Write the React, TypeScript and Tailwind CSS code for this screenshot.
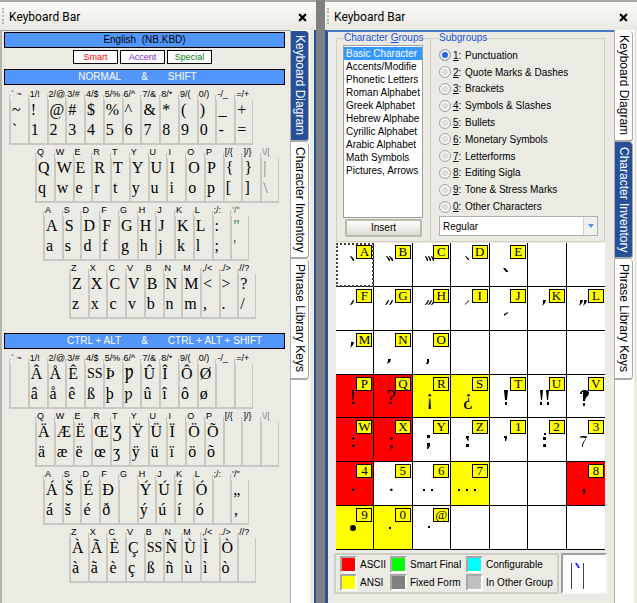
import { useState } from 'react';
import { X } from 'lucide-react';

// [label, shifted, plain, color?]
type KeyDef = [string, string, string, string?];

interface RowDef {
  className: string;
  keys: KeyDef[];
}

const ROW_1 = 'grid grid-cols-13 pl-[5px] pr-[32px]';
const ROW_2 = 'grid grid-cols-13 pl-[31px] pr-[6px]';
const ROW_3 = 'grid grid-cols-11 pl-[39px] pr-[36px]';
const ROW_4 = 'grid grid-cols-10 pl-[65px] pr-[29px]';

const NORMAL_ROWS: RowDef[] = [
  {
    className: ROW_1,
    keys: [
      ['` ~', '~', '`'], ['1/!', '!', '1'], ['2/@', '@', '2'], ['3/#', '#', '3'], ['4/$', '$', '4'],
      ['5/%', '%', '5'], ['6/^', '^', '6'], ['7/&', '&', '7'], ['8/*', '*', '8'], ['9/(', '(', '9'],
      ['0/)', ')', '0'], ['-/_', '_', '-'], ['=/+', '+', '='],
    ],
  },
  {
    className: ROW_2,
    keys: [
      ['Q', 'Q', 'q'], ['W', 'W', 'w'], ['E', 'E', 'e'], ['R', 'R', 'r'], ['T', 'T', 't'],
      ['Y', 'Y', 'y'], ['U', 'U', 'u'], ['I', 'I', 'i'], ['O', 'O', 'o'], ['P', 'P', 'p'],
      ['[/{', '{', '['], [']/}', '}', ']'], ['\\/|', '|', '\\', 'text-[#808080]'],
    ],
  },
  {
    className: ROW_3,
    keys: [
      ['A', 'A', 'a'], ['S', 'S', 's'], ['D', 'D', 'd'], ['F', 'F', 'f'], ['G', 'G', 'g'], ['H', 'H', 'h'],
      ['J', 'J', 'j'], ['K', 'K', 'k'], ['L', 'L', 'l'], [';/:', ':', ';'], ['\'/"', '"', "'", 'text-[#3f7a3f]'],
    ],
  },
  {
    className: ROW_4,
    keys: [
      ['Z', 'Z', 'z'], ['X', 'X', 'x'], ['C', 'C', 'c'], ['V', 'V', 'v'], ['B', 'B', 'b'],
      ['N', 'N', 'n'], ['M', 'M', 'm'], [',/<', '<', ','], ['./>', '>', '.'], ['//?', '?', '/'],
    ],
  },
];

const CTRL_ROWS: RowDef[] = [
  {
    className: ROW_1,
    keys: [
      ['` ~', '', ''], ['1/!', 'Â', 'â'], ['2/@', 'Å', 'å'], ['3/#', 'Ê', 'ê'], ['4/$', 'SS', 'ß'],
      ['5/%', 'Þ', 'þ'], ['6/^', 'Ƿ', 'ƿ'], ['7/&', 'Û', 'û'], ['8/*', 'Î', 'î'], ['9/(', 'Ô', 'ô'],
      ['0/)', 'Ø', 'ø'], ['-/_', '', ''], ['=/+', '', ''],
    ],
  },
  {
    className: ROW_2,
    keys: [
      ['Q', 'Ä', 'ä'], ['W', 'Æ', 'æ'], ['E', 'Ë', 'ë'], ['R', 'Œ', 'œ'], ['T', 'Ʒ', 'ʒ'],
      ['Y', 'Ÿ', 'ÿ'], ['U', 'Ü', 'ü'], ['I', 'Ï', 'ï'], ['O', 'Ö', 'ö'], ['P', 'Õ', 'õ'],
      ['[/{', '', ''], [']/}', '', ''], ['\\/|', '', '', 'text-[#808080]'],
    ],
  },
  {
    className: ROW_3,
    keys: [
      ['A', 'Á', 'á'], ['S', 'Š', 'š'], ['D', 'É', 'é'], ['F', 'Ð', 'ð'], ['G', '', ''], ['H', 'Ý', 'ý'],
      ['J', 'Ú', 'ú'], ['K', 'Í', 'í'], ['L', 'Ó', 'ó'], [';/:', '', ''], ['\'/"', '„', '‚'],
    ],
  },
  {
    className: ROW_4,
    keys: [
      ['Z', 'À', 'à'], ['X', 'Ã', 'ã'], ['C', 'È', 'è'], ['V', 'Ç', 'ç'], ['B', 'SS', 'ß'],
      ['N', 'Ñ', 'ñ'], ['M', 'Ù', 'ù'], [',/<', 'Ì', 'ì'], ['./>', 'Ò', 'ò'], ['//?', '', ''],
    ],
  },
];

const TABS = [
  { name: 'Keyboard Diagram', height: 'h-[111px]' },
  { name: 'Character Inventory', height: 'h-[117px]' },
  { name: 'Phrase Library Keys', height: 'h-[121px]' },
];

const GROUPS = [
  'Basic Character', 'Accents/Modifie', 'Phonetic Letters', 'Roman Alphabet', 'Greek Alphabet',
  'Hebrew Alphabe', 'Cyrillic Alphabet', 'Arabic Alphabet', 'Math Symbols', 'Pictures, Arrows',
];

const SUBGROUPS = [
  ['1', 'Punctuation'], ['2', 'Quote Marks & Dashes'], ['3', 'Brackets'], ['4', 'Symbols & Slashes'],
  ['5', 'Bullets'], ['6', 'Monetary Symbols'], ['7', 'Letterforms'], ['8', 'Editing Sigla'],
  ['9', 'Tone & Stress Marks'], ['0', 'Other Characters'],
];

interface CellDef {
  id?: string;
  text?: string;
  path?: string;
  bg?: string;
  bold?: boolean;
}

const RED = 'bg-[#ff0000]';
const YELLOW = 'bg-[#ffff00]';

// Paths are drawn on a 38x43 cell
const CELLS: CellDef[] = [
  { id: 'A', path: 'M14 13h1l3 3v2h-1z' },
  { id: 'B', path: 'M12 13h1l3 3v2h-1zM15 13h1l3 3v2h-1z' },
  { id: 'C', path: 'M12 13h1l2 3v2h-1zM15 13h1l2 3v2h-1zM18 13h1l2 3v2h-1z' },
  { id: 'D', path: 'M14 13h1l3 3v1h-1z' },
  { id: 'E', path: 'M13 25h2l3 3v1h-2z' },
  {},
  {},
  { id: 'F', path: 'M17 13h1l-1 3l-2 2h-1z' },
  { id: 'G', path: 'M14 13h1l-1 3l-2 2h-1zM18 13h1l-1 3l-2 2h-1z' },
  { id: 'H', path: 'M15 13h1l-1 3l-2 2h-1zM18 13h1l-1 3l-2 2h-1zM21 13h1l-1 3l-2 2h-1z' },
  { id: 'I', path: 'M18 13v1l-4 4v-1z' },
  { id: 'J', path: 'M18 25v1l-4 3v-2z' },
  { id: 'K', path: 'M15 13h3l-1 3l-3 3l1-3z' },
  { id: 'L', path: 'M13 13h3l-1 3l-3 3l1-3zM17 13h3l-1 3l-3 3l1-3z' },
  { id: 'M', path: 'M15 11h3l-1 3l-3 3l1-3z' },
  { id: 'N', path: 'M14 28h3l-1 3l-3 2l1-3z' },
  { id: 'O', path: 'M14 28h2v3l-1 2h-2l1-2z' },
  {},
  {},
  {},
  {},
  { id: 'P', text: '!', bg: RED },
  { id: 'Q', text: '?', bg: RED },
  { id: 'R', text: '¡', bg: YELLOW },
  { id: 'S', text: '¿', bg: YELLOW },
  { id: 'T', path: 'M14 15h4l-1 10h-2zM15 27h2v3h-2z' },
  { id: 'U', path: 'M12 15h3l-1 10h-1zM12 27h2v3h-2zM18 15h3l-1 10h-1zM19 27h2v3h-2z' },
  { id: 'V', path: 'M13 19c0-5 9-5 9-1c0 3-4 4-4 8h-2v-9h-1v2zM16 28h2v3h-2z' },
  { id: 'W', text: ':', bg: RED },
  { id: 'X', text: ';', bg: RED },
  { id: 'Y', path: 'M14 17h3v3h-3zM14 25h3v3l-2 3h-1v-2l1-1h-1z' },
  { id: 'Z', path: 'M15 18h3v2h-1l1 2l-1 1l-2-3zM15 26h3v3h-3z' },
  { id: '1', path: 'M14 18h3v2l-1 3h-1v-3h-1z' },
  { id: '2', path: 'M16 15h2v2h-2zM15 19h3v3h-3zM15 26h3v3h-3z' },
  { id: '3', path: 'M13 19c2-2 3 0 7-1c-1 4-4 6-4 11h-1c0-5 3-7 4-9c-3 0-4-1-6 0z' },
  { id: '4', text: '.', bg: RED },
  { id: '5', text: '.' },
  { id: '6', path: 'M10 27h2v2h-2zM18 27h2v2h-2z' },
  { id: '7', path: 'M7 27h2v2h-2zM15 27h2v2h-2zM23 27h2v2h-2z', bg: YELLOW },
  {},
  {},
  { id: '8', text: ',', bg: RED },
  { id: '9', path: 'M14 22a3 3 0 1 0 6 0a3 3 0 1 0-6 0z', bg: YELLOW },
  { id: '0', path: 'M15 21h2v2h-2z', bg: YELLOW },
  { id: '@', path: 'M15 20h2v2h-2z' },
  {},
  {},
  {},
  {},
];

const LEGEND = [
  ['ASCII', 'bg-[#ff0000]'], ['Smart Final', 'bg-[#00ff00]'], ['Configurable', 'bg-[#00ffff]'],
  ['ANSI', 'bg-[#ffff00]'], ['Fixed Form', 'bg-[#808080]'], ['In Other Group', 'bg-[#c0c0c0]'],
];

function TitleBar() {
  return (
    <header className="flex h-[30px] items-center border-t-2 border-[#aaa8a2] bg-linear-to-b from-[#fbfbf9] to-[#e9e8e0] pr-2 pl-[2px]">
      <span className="h-4 border-l-2 border-dotted border-[#b8b6ae]" />
      <h1 className="ml-[5px] flex-1 pt-[2px] font-['Roboto',sans-serif] text-[12px] text-black">Keyboard Bar</h1>
      <button aria-label="Close" className="pt-[2px]">
        <X className="size-[11px]" strokeWidth={5} />
      </button>
    </header>
  );
}

function SideTabs({ initial }: { initial: number }) {
  const [active, setActive] = useState(initial);
  return (
    <div role="tablist" className="flex w-5 shrink-0 flex-col border-l border-[#b0b0b0] bg-white pt-px">
      {TABS.map((tab, i) => (
        <button
          key={tab.name}
          role="tab"
          aria-selected={i === active}
          onClick={() => setActive(i)}
          className={`${tab.height} ${
            i === active ? 'bg-[#27509a] text-white' : 'bg-white text-black'
          } flex w-[18px] items-center justify-center rounded-r-sm border-r border-b-2 border-[#a8a8a8] text-[12px] leading-4 whitespace-nowrap [writing-mode:vertical-rl]`}
        >
          {tab.name}
        </button>
      ))}
    </div>
  );
}

function Banner({ left, right }: { left: string; right: string }) {
  return (
    <div className="grid h-4 grid-cols-[1fr_auto_1fr] items-center gap-5 border border-black bg-[#5295fb] text-[10px] leading-[14px] text-white">
      <span className="text-right">{left}</span>
      <span>&amp;</span>
      <span>{right}</span>
    </div>
  );
}

function KeyRows({ rows }: { rows: RowDef[] }) {
  return (
    <div>
      {rows.map((row, r) => (
        <div key={r} className={row.className}>
          {row.keys.map(([label, upper, lower, color]) => (
            <div key={label} className={`group h-[58px] ${color ?? 'text-black'}`}>
              <div className="flex h-[13px] text-[9px] leading-[15px] whitespace-pre">
                <span className="mt-2 w-[2px] shrink-0 border-t border-l border-[#c4c4be]" />
                {label}
              </div>
              <div className="h-[45px] border-b-2 border-l-2 border-[#c8c8c2] pl-px font-['Liberation_Serif','DejaVu_Serif',serif] text-[16px] leading-5 group-last:border-r">
                <div className={upper.length > 1 ? 'h-5 text-[14px]' : 'h-5'}>{upper}</div>
                <div className="h-5">{lower}</div>
              </div>
            </div>
          ))}
        </div>
      ))}
    </div>
  );
}

function KeyboardDiagram() {
  return (
    <main className="min-w-0 flex-1 border-t border-[#a0a0a0] px-[2px] pt-px pr-[5px]">
      <div className="h-4 border border-black bg-[#5295fb] text-center text-[10px] leading-[14px] whitespace-pre text-black">
        English  (NB.KBD)
      </div>
      <div className="mt-[2px] flex justify-center gap-[2px] pr-1 text-[9px] leading-3">
        <button className="h-[14px] w-[45px] border border-black bg-white text-[#ff0000]">Smart</button>
        <button className="h-[14px] w-[45px] border border-black bg-white text-[#7a1fd0]">Accent</button>
        <button className="h-[14px] w-[45px] border border-black bg-white text-[#008000]">Special</button>
      </div>
      <div className="mt-[5px] mb-[2px]">
        <Banner left="NORMAL" right="SHIFT" />
      </div>
      <KeyRows rows={NORMAL_ROWS} />
      <div className="mt-[14px] mb-[2px]">
        <Banner left="CTRL + ALT" right="CTRL + ALT + SHIFT" />
      </div>
      <KeyRows rows={CTRL_ROWS} />
    </main>
  );
}

function CharacterGroups() {
  const [selected, setSelected] = useState(0);
  return (
    <fieldset className="w-[95px] min-w-0 shrink-0 border border-[#cfcfc8] pr-[7px] pl-[6px]">
      <legend className="ml-px text-[10px] leading-3 whitespace-nowrap text-[#1c4fd6]">
        Character <u>G</u>roups
      </legend>
      <ul
        role="listbox"
        aria-label="Character Groups"
        className="mt-px h-[173px] border border-[#a0a0a0] bg-white py-px text-[10px] leading-[13px]"
      >
        {GROUPS.map((group, i) => (
          <li
            key={group}
            role="option"
            aria-selected={i === selected}
            onClick={() => setSelected(i)}
            className={`${i === selected ? 'bg-[#3399ff] text-white' : 'text-black'} pl-[2px] whitespace-nowrap`}
          >
            {group}
          </li>
        ))}
      </ul>
      <button className="mt-px ml-[2px] block h-[18px] w-[77px] rounded-[2px] border-2 border-[#b9b9ac] bg-linear-to-b from-white to-[#dddcd0] text-[10px] leading-3 text-black">
        Insert
      </button>
    </fieldset>
  );
}

function Subgroups() {
  const [value, setValue] = useState('1');
  return (
    <fieldset className="min-w-0 flex-1 border border-l-0 border-[#cfcfc8] pr-[6px] pb-[5px] pl-[8px]">
      <legend className="text-[10px] leading-3 text-[#1c4fd6]">Subgroups</legend>
      <div className="mt-[3px] grid h-[168px] grid-rows-10 text-[10px] text-black">
        {SUBGROUPS.map(([id, name]) => (
          <label key={id} className="flex items-center">
            <input
              type="radio"
              name="subgroup"
              checked={value === id}
              onChange={() => setValue(id)}
              className="size-3 appearance-none rounded-full border border-[#a8a8a8] bg-[#dcdcd8] shadow-[inset_0_0_0_2px_#f4f4f2] checked:bg-[#2563eb]"
            />
            <span className="ml-[2px] w-3">
              <u>{id}</u>:
            </span>
            {name}
          </label>
        ))}
      </div>
      <div className="relative mt-px">
        <select
          aria-label="Style"
          className="block h-5 w-full appearance-none border border-[#b0b0b0] bg-white pl-[3px] text-[10px] text-black"
        >
          <option>Regular</option>
          <option>Bold</option>
          <option>Italic</option>
        </select>
        <span className="pointer-events-none absolute inset-y-px right-px flex w-[14px] items-center justify-center border-l border-[#d0d0d0] bg-[#f1f1ee]">
          <svg viewBox="0 0 6 4" className="h-1 w-[6px]">
            <path d="M0 0h6L3 4z" fill="#4f94e8" />
          </svg>
        </span>
      </div>
    </fieldset>
  );
}

function CharCell({ cell }: { cell: CellDef }) {
  return (
    <div
      className={`relative overflow-hidden border-r border-b border-black nth-[7n]:border-r-0 ${cell.bg ?? 'bg-white'} ${
        cell.id === 'A' ? 'outline-2 -outline-offset-2 outline-dotted outline-[#404040]' : ''
      }`}
    >
      {cell.path && (
        <svg viewBox="0 0 38 43" className="block h-[43px] w-[38px]">
          <path d={cell.path} fill="black" />
        </svg>
      )}
      {cell.text && (
        <div className="pt-[10px] pr-1 text-center font-['Liberation_Serif',serif] text-[22px] leading-6 text-black">
          {cell.text}
        </div>
      )}
      {cell.id && (
        <span className="absolute top-[2px] right-px flex h-[14px] w-4 items-center justify-center border border-black bg-[#ffff00] font-['Liberation_Serif',serif] text-[13px] leading-3 text-black">
          {cell.id}
        </span>
      )}
    </div>
  );
}

function CharacterInventory() {
  return (
    <main className="min-w-0 flex-1 border-t-2 border-l-[3px] border-t-[#4b77bd] border-l-[#27509a] px-[6px]">
      <div className="flex pr-[3px] pl-[2px]">
        <CharacterGroups />
        <Subgroups />
      </div>
      <div className="mt-px mr-[3px] ml-[2px] grid h-[307px] grid-cols-7 grid-rows-7">
        {CELLS.map((cell, i) => (
          <CharCell key={i} cell={cell} />
        ))}
      </div>
      <div className="mt-[3px] flex gap-[2px] pr-px">
        <div className="grid flex-1 grid-cols-[50px_76px_1fr] items-center gap-y-px border-2 border-[#cfcfc8] py-px pl-[4px]">
          {LEGEND.map(([name, color]) => (
            <div key={name} className="flex items-center gap-[3px] text-[10px] leading-4 whitespace-nowrap text-black">
              <span className={`size-[17px] border-2 border-t-[#a8a8a8] border-r-white border-b-white border-l-[#a8a8a8] ${color}`} />
              {name}
            </div>
          ))}
        </div>
        <div className="flex w-[46px] border-2 border-t-[#a0a0a0] border-r-[#f8f8f8] border-b-[#f8f8f8] border-l-[#a0a0a0] bg-white pt-[7px] pl-[7px]">
          <svg viewBox="0 0 16 28" className="h-7 w-4">
            <path d="M1.5 1v26M13.5 1v26" stroke="#444" strokeWidth="1" />
            <path d="M5 1h2l3 5h-2z" fill="#1a1aff" />
          </svg>
        </div>
      </div>
    </main>
  );
}

export default function App() {
  return (
    <div className="flex min-h-screen bg-[#808080] font-['Liberation_Sans',Arial,sans-serif]">
      <section className="flex min-w-0 flex-[316] flex-col bg-[#ebebe3]">
        <TitleBar />
        <div className="flex flex-1 border-r-2 border-l-2 border-r-[#27509a] border-l-[#b4b4b0]">
          <KeyboardDiagram />
          <SideTabs initial={0} />
          <div className="w-1" />
        </div>
      </section>
      <div className="w-[9px] shrink-0" />
      <section className="flex min-w-0 flex-[312] flex-col bg-[#ebebe3]">
        <TitleBar />
        <div className="flex flex-1">
          <CharacterInventory />
          <SideTabs initial={1} />
          <div className="w-[3px]" />
        </div>
      </section>
    </div>
  );
}
